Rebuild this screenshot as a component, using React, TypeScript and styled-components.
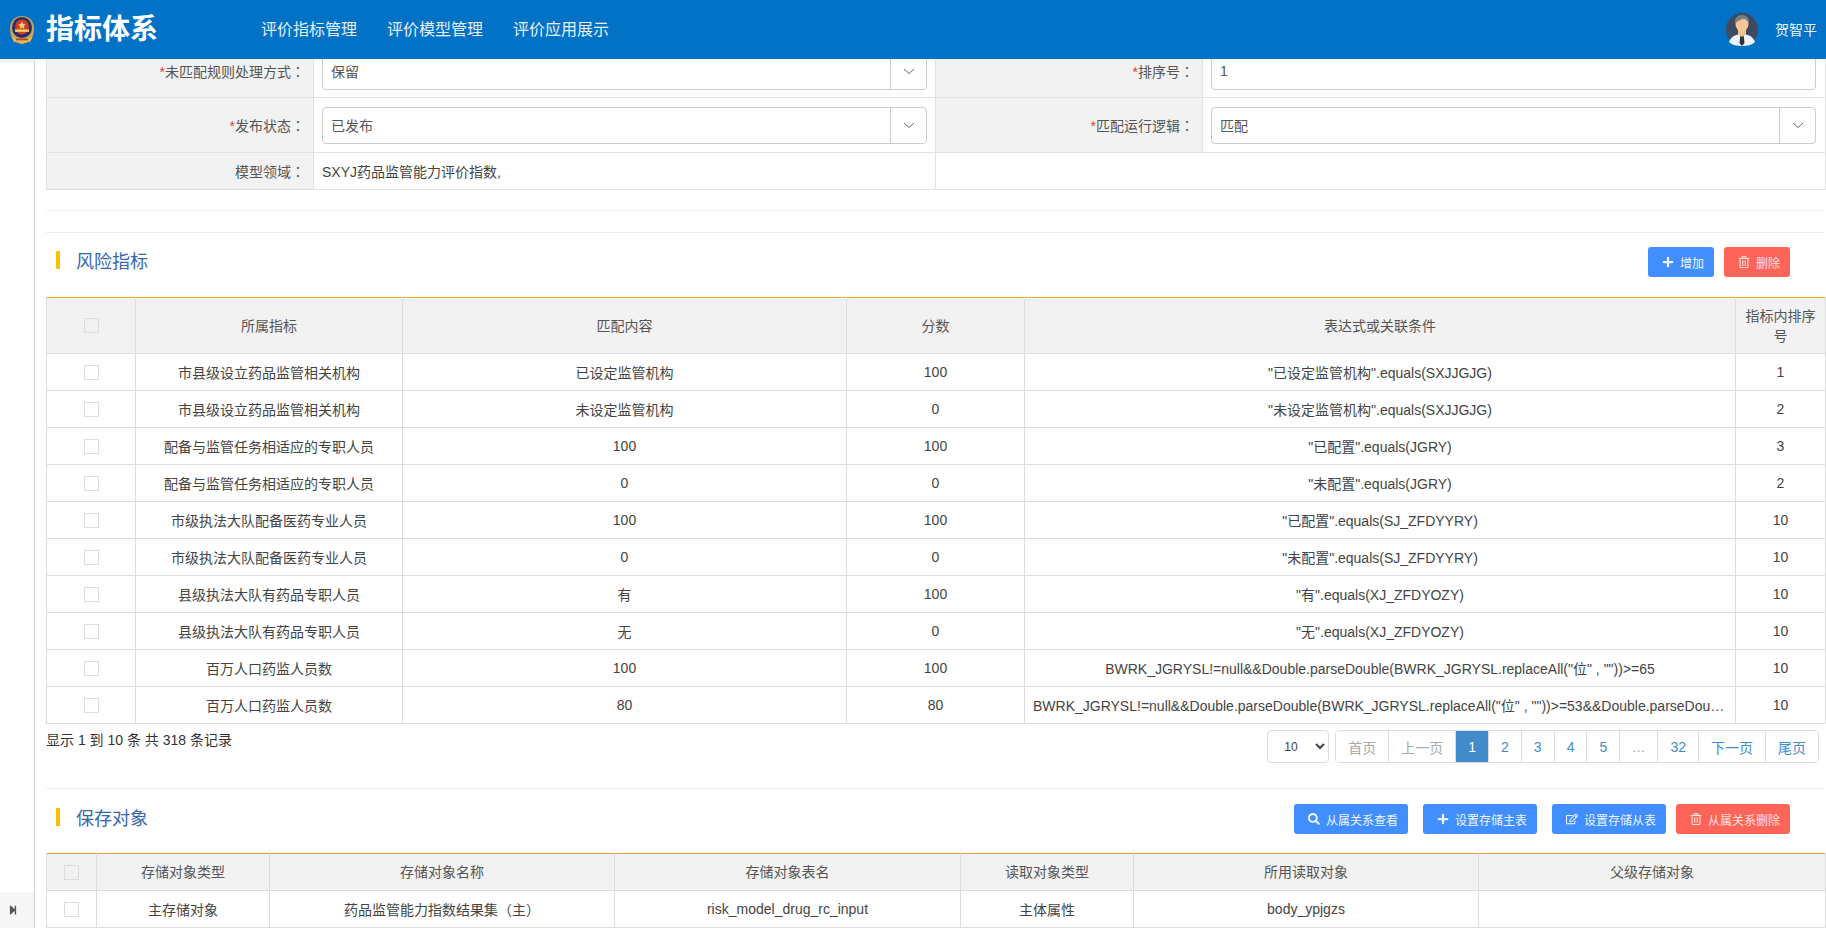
import React from 'react';
import styled, { createGlobalStyle } from 'styled-components';
import { FaPlus, FaRegEdit, FaRegTrashAlt, FaSearch, FaStepForward } from 'react-icons/fa';

const GlobalStyle = createGlobalStyle`
  html, body {
    margin: 0;
    height: 100%;
    overflow: hidden;
    background: #fff;
  }
  body {
    font-family: "Liberation Sans", "Noto Sans CJK SC", sans-serif;
    font-size: 14px;
    color: #444;
  }
  * { box-sizing: border-box; }
`;

const Page = styled.div`
  height: 928px;
  display: flex;
  flex-direction: column;
  overflow: hidden;
`;

const TopBar = styled.header`
  flex: 0 0 59px;
  position: relative;
  z-index: 2;
  display: flex;
  align-items: center;
  padding: 0 9px 0 8px;
  background: #0272c7;
  color: #fff;
`;

const Brand = styled.div`
  display: flex;
  align-items: center;
  gap: 10px;
  width: 253px;
`;

const BrandName = styled.span`
  font-size: 28px;
  font-weight: 700;
  line-height: 1;
`;

const Nav = styled.nav`
  display: flex;
  gap: 30px;
  flex: 1;
  padding-bottom: 4px;
`;

const NavItem = styled.a`
  font-size: 16px;
  color: #e6f1fa;
`;

const UserBox = styled.div`
  display: flex;
  align-items: center;
  gap: 17px;
  font-size: 14px;
  color: #e6f1fa;
`;

const UserName = styled.span`
  padding-bottom: 2px;
`;

const Body = styled.div`
  flex: 1;
  display: flex;
  min-height: 0;
`;

const Side = styled.aside`
  flex: 0 0 35px;
  display: flex;
  flex-direction: column;
  justify-content: space-between;
  border-top: 4px solid #f3f3f3;
  border-right: 1px solid #ccc;
`;

const SideToggle = styled.div`
  height: 36px;
  display: flex;
  align-items: center;
  justify-content: center;
  padding-right: 8px;
  background: #f7f7f7;
  color: #555;
  font-size: 10px;
`;

const Content = styled.main`
  flex: 1;
  min-width: 0;
  padding: 0 1px 0 11px;
  overflow: hidden;
`;

const FormTable = styled.table`
  width: 100%;
  margin-top: -15px;
  table-layout: fixed;
  border-collapse: collapse;
`;

const FormRow = styled.tr<{ $h: number }>`
  height: ${p => p.$h}px;
`;

const LabelCell = styled.td`
  padding: 0 8px 0 0;
  border: 1px solid #e2e2e2;
  background: #f2f2f2;
  text-align: right;
  color: #555;
`;

const ValueCell = styled.td`
  padding: 0 8px;
  border: 1px solid #e2e2e2;

  &:last-child {
    padding-right: 9px;
  }
`;

const Star = styled.span`
  color: #e4393c;
`;

/* the traditional cut of the CJK font keeps the full-width colon centred */
const Colon = styled.span`
  font-family: "Noto Sans CJK TC", sans-serif;
`;

const Field = styled.div`
  height: 37px;
  display: flex;
  align-items: stretch;
  border: 1px solid #ccc;
  border-radius: 4px;
  color: #555;
`;

const FieldText = styled.span`
  flex: 1;
  display: flex;
  align-items: center;
  padding-left: 8px;
`;

const FieldArrow = styled.span`
  flex: 0 0 36px;
  display: flex;
  align-items: center;
  justify-content: center;
  border-left: 1px solid #ccc;
`;

const Rule = styled.div<{ $top: number }>`
  margin-top: ${p => p.$top}px;
  border-top: 1px solid #eee;
`;

const SectionHead = styled.div<{ $above: number; $below: number }>`
  display: flex;
  align-items: center;
  justify-content: space-between;
  margin: ${p => p.$above}px 0 ${p => p.$below}px;
  padding: 0 35px 0 10px;
`;

const SectionTitle = styled.h3`
  display: flex;
  align-items: center;
  gap: 16px;
  margin: 0;
  padding-bottom: 4px;
  font-size: 18px;
  font-weight: 400;
  color: #3567b1;

  &::before {
    content: '';
    width: 4px;
    height: 18px;
    background: #fcc000;
  }
`;

const Actions = styled.div`
  display: flex;
  gap: 15px;
`;

const ActionButton = styled.button<{ $danger?: boolean }>`
  height: 30px;
  display: flex;
  align-items: center;
  gap: 6px;
  padding: 0 10px 0 14px;
  border: 0;
  border-radius: 3px;
  background: ${p => (p.$danger ? '#ff6459' : '#418fff')};
  color: ${p => (p.$danger ? '#ffe3e0' : '#eef5ff')};
  font: inherit;
  font-size: 12px;

  &:last-child {
    margin-left: ${p => (p.$danger ? '-5px' : '0')};
  }
`;

const DataTable = styled.table<{ $accent: string }>`
  width: 100%;
  table-layout: fixed;
  border-collapse: collapse;
  border-top: 1px solid ${p => p.$accent};
`;

const HeadRow = styled.tr<{ $h: number }>`
  height: ${p => p.$h}px;
`;

const HeadCell = styled.th`
  padding: 0 8px;
  border: 1px solid #ddd;
  border-top: 0;
  background: #f2f2f2;
  font-weight: 400;
  line-height: 20px;
  color: #555;
`;

const DataRow = styled.tr`
  height: 37px;
`;

const DataCell = styled.td`
  padding: 0 8px;
  border: 1px solid #ddd;
  text-align: center;
  white-space: nowrap;
  overflow: hidden;
  text-overflow: ellipsis;
`;

const Check = styled.input.attrs({ type: 'checkbox' })`
  appearance: none;
  display: block;
  width: 15px;
  height: 15px;
  margin: 0 auto;
  border: 1px solid #ddd;
  background: #fff;
`;

const HeadCheck = styled(Check)`
  background: #f2f2f2;
`;

const TableFoot = styled.div`
  display: flex;
  justify-content: space-between;
  align-items: flex-start;
  padding: 6px 6px 0 0;
  height: 39px;
`;

const Summary = styled.div`
  line-height: 20px;
  color: #333;
`;

const Pager = styled.div`
  display: flex;
  gap: 6px;
`;

const SizeSelect = styled.select`
  width: 62px;
  height: 33px;
  padding-left: 12px;
  border: 1px solid #ddd;
  border-radius: 4px;
  background: #fff;
  font: inherit;
  font-size: 12px;
  color: #444;
`;

const PageList = styled.div`
  display: flex;
  height: 33px;
  border: 1px solid #ddd;
  border-radius: 4px;
  overflow: hidden;
`;

const PageLink = styled.a<{ $active?: boolean; $off?: boolean; $dots?: boolean }>`
  display: flex;
  align-items: center;
  padding: 0 12px;
  background: ${p => (p.$active ? '#428bca' : '#fff')};
  color: ${p => (p.$active ? '#fff' : p.$off ? '#aaa' : '#428bca')};
  letter-spacing: ${p => (p.$dots ? '0.5px' : 'normal')};

  & + & {
    border-left: 1px solid #ddd;
  }
`;

const Emblem = () => (
  <svg width="28" height="30" viewBox="0 0 28 30">
    <path d="M14 1c6 0 12 4 12 12 0 5-1 9-3 12l-9 4-9-4c-2-3-3-7-3-12C2 5 8 1 14 1z" fill="#c9a25c" />
    <ellipse cx="14" cy="12.5" rx="10" ry="10.5" fill="#27305f" />
    <ellipse cx="14" cy="12" rx="7" ry="7.5" fill="#d23a2c" />
    <path d="M14 6.5l1.2 2.6 2.6.3-2 1.8.6 2.7L14 12.6l-2.4 1.3.6-2.7-2-1.8 2.6-.3z" fill="#f3d06a" />
    <rect x="7" y="14.5" width="14" height="2.4" fill="#f3d06a" />
    <path d="M4 22c4 2.600 16 2.600 20 0l-1.500 4.500-8.500 2.500-8.500-2.500z" fill="#e6b94e" />
    <rect x="8" y="23.500" width="12" height="1.800" fill="#b5472f" />
  </svg>
);

const Avatar = () => (
  <svg width="32" height="33" viewBox="0 0 32 33">
    <ellipse cx="16" cy="16.500" rx="16" ry="16.500" fill="#3e4a5f" />
    <path d="M3 29c2-6 8-8 13-8s11 2 13 8c-3 3-8 4-13 4S6 32 3 29z" fill="#eef4f7" />
    <path d="M14.500 21h3l1 9-2.500 3-2.500-3z" fill="#28303c" />
    <path d="M12 15h8v6l-4 3-4-3z" fill="#f2c08e" />
    <ellipse cx="16" cy="11" rx="6.500" ry="7.500" fill="#f6c795" />
    <path d="M9 11c-1-6 3-9 7-9s8 3 7 9c-1-3-3-5-6-5-3 1-6 2-8 5z" fill="#7a8084" />
  </svg>
);

const Chevron = () => (
  <svg width="12" height="7" viewBox="0 0 12 7">
    <path d="M1 1l5 4.500L11 1" fill="none" stroke="#666" strokeWidth="1" />
  </svg>
);

const riskRows = [
  ['市县级设立药品监管相关机构', '已设定监管机构', '100', '"已设定监管机构".equals(SXJJGJG)', '1'],
  ['市县级设立药品监管相关机构', '未设定监管机构', '0', '"未设定监管机构".equals(SXJJGJG)', '2'],
  ['配备与监管任务相适应的专职人员', '100', '100', '"已配置".equals(JGRY)', '3'],
  ['配备与监管任务相适应的专职人员', '0', '0', '"未配置".equals(JGRY)', '2'],
  ['市级执法大队配备医药专业人员', '100', '100', '"已配置".equals(SJ_ZFDYYRY)', '10'],
  ['市级执法大队配备医药专业人员', '0', '0', '"未配置".equals(SJ_ZFDYYRY)', '10'],
  ['县级执法大队有药品专职人员', '有', '100', '"有".equals(XJ_ZFDYOZY)', '10'],
  ['县级执法大队有药品专职人员', '无', '0', '"无".equals(XJ_ZFDYOZY)', '10'],
  ['百万人口药监人员数', '100', '100', 'BWRK_JGRYSL!=null&&Double.parseDouble(BWRK_JGRYSL.replaceAll("位" , ""))>=65', '10'],
  ['百万人口药监人员数', '80', '80', 'BWRK_JGRYSL!=null&&Double.parseDouble(BWRK_JGRYSL.replaceAll("位" , ""))>=53&&Double.parseDouble(BWRK_JGRYSL.replaceAll("位" , ""))<65', '10'],
];

const riskCols = [89, 267, 444, 178, 711, 90];
const riskHead = ['所属指标', '匹配内容', '分数', '表达式或关联条件', '指标内排序号'];

const saveCols = [50, 173, 345, 346, 173, 345, 347];
const saveHead = ['存储对象类型', '存储对象名称', '存储对象表名', '读取对象类型', '所用读取对象', '父级存储对象'];
const saveRow = ['主存储对象', '药品监管能力指数结果集（主）', 'risk_model_drug_rc_input', '主体属性', 'body_ypjgzs', ''];

const pages = ['1', '2', '3', '4', '5', '...', '32', '下一页', '尾页'];

const App: React.FC = () => (
  <Page>
    <GlobalStyle />
    <TopBar>
      <Brand>
        <Emblem />
        <BrandName>指标体系</BrandName>
      </Brand>
      <Nav>
        <NavItem>评价指标管理</NavItem>
        <NavItem>评价模型管理</NavItem>
        <NavItem>评价应用展示</NavItem>
      </Nav>
      <UserBox>
        <Avatar />
        <UserName>贺智平</UserName>
      </UserBox>
    </TopBar>
    <Body>
      <Side>
        <span />
        <SideToggle>
          <FaStepForward />
        </SideToggle>
      </Side>
      <Content>
        <FormTable>
          <colgroup>
            <col width={267} />
            <col width={622} />
            <col width={267} />
            <col width={623} />
          </colgroup>
          <tbody>
            <FormRow $h={53}>
              <LabelCell><Star>*</Star>未匹配规则处理方式<Colon>：</Colon></LabelCell>
              <ValueCell>
                <Field>
                  <FieldText>保留</FieldText>
                  <FieldArrow><Chevron /></FieldArrow>
                </Field>
              </ValueCell>
              <LabelCell><Star>*</Star>排序号<Colon>：</Colon></LabelCell>
              <ValueCell>
                <Field>
                  <FieldText>1</FieldText>
                </Field>
              </ValueCell>
            </FormRow>
            <FormRow $h={55}>
              <LabelCell><Star>*</Star>发布状态<Colon>：</Colon></LabelCell>
              <ValueCell>
                <Field>
                  <FieldText>已发布</FieldText>
                  <FieldArrow><Chevron /></FieldArrow>
                </Field>
              </ValueCell>
              <LabelCell><Star>*</Star>匹配运行逻辑<Colon>：</Colon></LabelCell>
              <ValueCell>
                <Field>
                  <FieldText>匹配</FieldText>
                  <FieldArrow><Chevron /></FieldArrow>
                </Field>
              </ValueCell>
            </FormRow>
            <FormRow $h={37}>
              <LabelCell>模型领域<Colon>：</Colon></LabelCell>
              <ValueCell>SXYJ药品监管能力评价指数,</ValueCell>
              <ValueCell colSpan={2} />
            </FormRow>
          </tbody>
        </FormTable>

        <Rule $top={20} />
        <Rule $top={21} />

        <SectionHead $above={14} $below={20}>
          <SectionTitle>风险指标</SectionTitle>
          <Actions>
            <ActionButton><FaPlus />增加</ActionButton>
            <ActionButton $danger><FaRegTrashAlt />删除</ActionButton>
          </Actions>
        </SectionHead>

        <DataTable $accent="#f7a823">
          <colgroup>
            {riskCols.map((w, i) => <col key={i} width={w} />)}
          </colgroup>
          <thead>
            <HeadRow $h={56}>
              <HeadCell><HeadCheck /></HeadCell>
              {riskHead.map(h => <HeadCell key={h}>{h}</HeadCell>)}
            </HeadRow>
          </thead>
          <tbody>
            {riskRows.map((row, i) => (
              <DataRow key={i}>
                <DataCell><Check /></DataCell>
                {row.map((cell, j) => <DataCell key={j}>{cell}</DataCell>)}
              </DataRow>
            ))}
          </tbody>
        </DataTable>

        <TableFoot>
          <Summary>显示 1 到 10 条 共 318 条记录</Summary>
          <Pager>
            <SizeSelect defaultValue="10">
              <option value="10">10</option>
            </SizeSelect>
            <PageList>
              <PageLink $off>首页</PageLink>
              <PageLink $off>上一页</PageLink>
              {pages.map(p => (
                <PageLink key={p} $active={p === '1'} $off={p === '...'} $dots={p === '...'}>{p}</PageLink>
              ))}
            </PageList>
          </Pager>
        </TableFoot>

        <Rule $top={25} />

        <SectionHead $above={15} $below={19}>
          <SectionTitle>保存对象</SectionTitle>
          <Actions>
            <ActionButton><FaSearch />从属关系查看</ActionButton>
            <ActionButton><FaPlus />设置存储主表</ActionButton>
            <ActionButton><FaRegEdit />设置存储从表</ActionButton>
            <ActionButton $danger><FaRegTrashAlt />从属关系删除</ActionButton>
          </Actions>
        </SectionHead>

        <DataTable $accent="#f29a3a">
          <colgroup>
            {saveCols.map((w, i) => <col key={i} width={w} />)}
          </colgroup>
          <thead>
            <HeadRow $h={37}>
              <HeadCell><HeadCheck /></HeadCell>
              {saveHead.map(h => <HeadCell key={h}>{h}</HeadCell>)}
            </HeadRow>
          </thead>
          <tbody>
            <DataRow>
              <DataCell><Check /></DataCell>
              {saveRow.map((cell, j) => <DataCell key={j}>{cell}</DataCell>)}
            </DataRow>
          </tbody>
        </DataTable>
      </Content>
    </Body>
  </Page>
);

export default App;
